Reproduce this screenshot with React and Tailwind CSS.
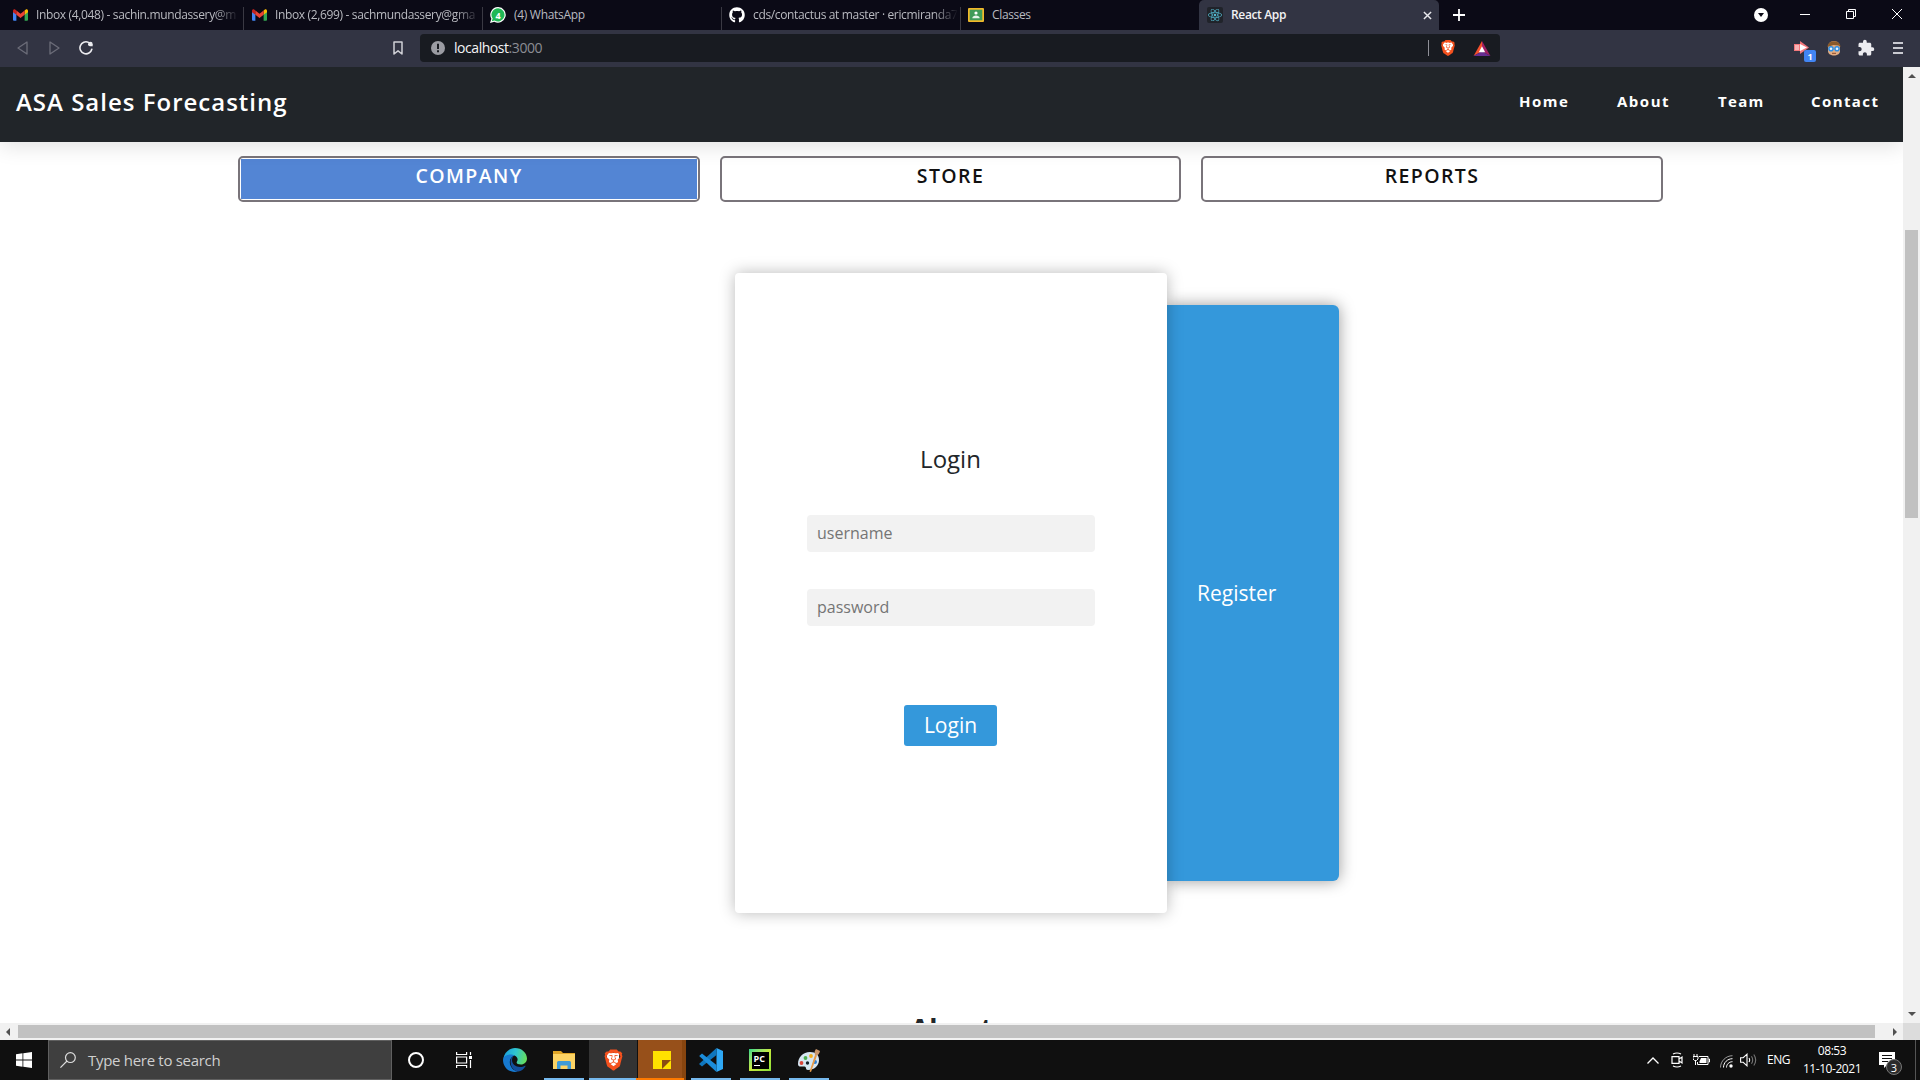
import React from "react";
import { FaGithub, FaReact } from "react-icons/fa";
import { MdExtension } from "react-icons/md";
import { SiBrave } from "react-icons/si";

function Gmail() {
  return (
    <svg viewBox="0 0 16 12" className="h-[12px] w-[15px] shrink-0">
      <path d="M0 2v9a1 1 0 0 0 1 1h2.6V4.5z" fill="#4285f4" />
      <path d="M16 2v9a1 1 0 0 1-1 1h-2.6V4.5z" fill="#34a853" />
      <path d="M12.4 1.2v4.6L16 3V1.6C16 .2 14.5-.5 13.4.4z" fill="#fbbc04" />
      <path d="M0 3l3.6 2.8V1.2L2.6.4C1.5-.5 0 .2 0 1.6z" fill="#c5221f" />
      <path d="M3.6 5.8V1.2L8 4.6l4.4-3.4v4.6L8 9.2z" fill="#ea4335" />
    </svg>
  );
}

function WhatsApp() {
  return (
    <div className="relative flex h-4 w-4 shrink-0 items-center justify-center">
      <svg viewBox="0 0 16 16" className="absolute h-4 w-4">
        <path d="M8.200 0A7.800 7.800 0 0 0 1.400 11.800L0 16l4.300-1.300A7.800 7.800 0 1 0 8.200 0z" fill="#fff" />
        <path d="M8.200 1.200A6.600 6.600 0 0 0 2.700 11.600l-1 2.700 2.900-.8A6.600 6.600 0 1 0 8.200 1.200z" fill="#1fb855" />
      </svg>
      <span className="relative text-[9px] font-bold leading-none text-white">4</span>
    </div>
  );
}

function Classroom() {
  return (
    <svg viewBox="0 0 16 14" className="h-[14px] w-4 shrink-0">
      <rect width="16" height="14" rx="1" fill="#f2b92a" />
      <rect x="1.700" y="1.700" width="12.600" height="10.600" fill="#3f9b58" />
      <circle cx="8" cy="5" r="1.600" fill="#fff" />
      <path d="M4.300 10.300c0-2 2-2.800 3.700-2.800s3.700.8 3.700 2.800z" fill="#e6f3ea" />
    </svg>
  );
}

function BraveIcon({ className }) {
  return (
    <div className={"relative flex items-center justify-center " + className}>
      <div className="absolute h-[62%] w-[60%] rounded-b-full bg-white" />
      <SiBrave className="relative h-full w-full" color="#f4511e" />
    </div>
  );
}

function TabStrip() {
  const text = "overflow-hidden whitespace-nowrap text-[12px] text-[#b9bac0]";
  const fade = " [mask-image:linear-gradient(to_right,black_88%,transparent)]";
  return (
    <div className="flex h-[30px] shrink-0 bg-[#0b0a16]">
      <div className="flex w-[243px] items-center pl-[13px]">
        <Gmail />
        <span className={text + fade + " ml-2 w-[203px] tracking-[-0.350px]"}>Inbox (4,048) - sachin.mundassery@m</span>
      </div>
      <div className="mt-[7px] w-px bg-[#3a3943]" />
      <div className="flex w-[238px] items-center pl-[8px]">
        <Gmail />
        <span className={text + fade + " ml-2 w-[205px] tracking-[-0.350px]"}>Inbox (2,699) - sachmundassery@gma</span>
      </div>
      <div className="mt-[7px] w-px bg-[#3a3943]" />
      <div className="flex w-[238px] items-center pl-[7px]">
        <WhatsApp />
        <span className={text + " ml-2 tracking-[-0.300px]"}>(4) WhatsApp</span>
      </div>
      <div className="mt-[7px] w-px bg-[#3a3943]" />
      <div className="flex w-[238px] items-center pl-[7px]">
        <FaGithub className="h-4 w-4 shrink-0 text-white" />
        <span className={text + fade + " ml-2 w-[205px] tracking-[-0.350px]"}>cds/contactus at master · ericmiranda7</span>
      </div>
      <div className="mt-[7px] w-px bg-[#3a3943]" />
      <div className="flex w-[238px] items-center pl-[7px]">
        <Classroom />
        <span className={text + " ml-2 tracking-[-0.350px]"}>Classes</span>
      </div>
      <div className="flex w-[240px] items-center rounded-t-[5px] bg-[#323443] pl-2 pr-[7px]">
        <span className="flex h-4 w-4 items-center justify-center rounded-[2px] bg-[#20232a]">
          <FaReact className="h-[14px] w-[14px] text-[#53b8cf]" />
        </span>
        <span className="ml-2 flex-1 text-[12px] font-semibold tracking-[-0.350px] text-[#f2f2f4]">React App</span>
        <svg viewBox="0 0 10 10" className="h-[9px] w-[9px]" stroke="#e8e8ec" strokeWidth="1.600">
          <path d="M1 1l8 8M9 1l-8 8" />
        </svg>
      </div>
      <div className="flex flex-1 items-center pl-[14px]">
        <svg viewBox="0 0 12 12" className="h-3 w-3" stroke="#fff" strokeWidth="1.800">
          <path d="M6 0v12M0 6h12" />
        </svg>
        <svg viewBox="0 0 14 14" className="ml-[289px] h-[14px] w-[14px]">
          <circle cx="7" cy="7" r="7" fill="#fff" />
          <path d="M4 5h6L7 9z" fill="#0b0a16" />
        </svg>
        <div className="mb-px ml-[32px] h-px w-[10px] bg-white" />
        <svg viewBox="0 0 10 10" className="mb-[2px] ml-[36px] h-[10px] w-[10px]" fill="none" stroke="#fff">
          <path d="M.5 2.500h7v7h-7zM2.500 2.500v-2h7v7h-2" />
        </svg>
        <svg viewBox="0 0 10 10" className="mb-[2px] ml-[36px] h-[10px] w-[10px]" stroke="#fff">
          <path d="M0 0l10 10M10 0L0 10" />
        </svg>
      </div>
    </div>
  );
}

function AddressBar() {
  return (
    <div className="flex h-[37px] shrink-0 items-center bg-[#323443] pb-px">
      <svg viewBox="0 0 11 14" className="ml-[17px] h-[14px] w-[11px]" fill="none" stroke="#6c6d79" strokeWidth="1.300">
        <path d="M10 1v12L1 7z" strokeLinejoin="round" />
      </svg>
      <svg viewBox="0 0 11 14" className="ml-[21px] h-[14px] w-[11px]" fill="none" stroke="#6c6d79" strokeWidth="1.300">
        <path d="M1 1v12l9-6z" strokeLinejoin="round" />
      </svg>
      <svg viewBox="0 0 14 14" className="ml-[19px] h-[14px] w-[14px]" fill="none" stroke="#ececf0" strokeWidth="1.600">
        <path d="M12.800 8.200A6 6 0 1 1 9.500 1.400" strokeLinecap="round" />
        <path d="M9 3.200a2.300 2.300 0 0 1 4.700 0V5.300H11A2.200 2.200 0 0 1 9 3.200z" fill="#ececf0" stroke="none" />
      </svg>
      <svg viewBox="0 0 10 14" className="ml-[300px] h-[14px] w-[10px]" fill="none" stroke="#d0d0d6" strokeWidth="1.500">
        <path d="M1 1h8v12L5 9.800 1 13z" strokeLinejoin="round" />
      </svg>
      <div className="ml-[17px] flex h-[28px] w-[1080px] items-center rounded-[4px] bg-[#181b21] pl-[11px] pr-[9px]">
        <svg viewBox="0 0 14 14" className="h-[14px] w-[14px]">
          <circle cx="7" cy="7" r="7" fill="#9b9ca3" />
          <path d="M6 2.800h2v5.200H6zM6 9.300h2v2H6z" fill="#181b21" />
        </svg>
        <span className="ml-[9px] flex-1 text-[14px] leading-[20px] tracking-[-0.450px] text-[#8b8d94]">
          <span className="text-[#f4f4f6]">localhost</span>:3000
        </span>
        <div className="h-4 w-px bg-[#8f9098]" />
        <BraveIcon className="ml-[11px] h-[18px] w-[16px]" />
        <svg viewBox="0 0 18 16" className="ml-[17px] h-[15px] w-[18px]">
          <path d="M9 0L0 16l9-5z" fill="#f4502c" />
          <path d="M9 0l9 16-9-5z" fill="#9e1f63" />
          <path d="M0 16h18l-9-5z" fill="#662d91" />
          <path d="M9 5.500l3.400 6.500H5.600z" fill="#fff" />
        </svg>
      </div>
      <div className="relative ml-[294px] h-4 w-4">
        <svg viewBox="0 0 16 16" className="h-4 w-4">
          <path d="M0 4h6V1l9 6.500L6 14v-3H0z" fill="#f3787c" />
          <path d="M6 4l7 3.500L6 11z" fill="#fff" />
          <path d="M1 5h4v5H1z" fill="#f9b3b5" />
        </svg>
        <span className="absolute left-[10px] top-[10px] flex h-3 w-3 items-center justify-center rounded-[2px] bg-[#4285f4] text-[9px] font-bold leading-none text-white">1</span>
      </div>
      <svg viewBox="0 0 14 15" className="ml-[17px] h-[15px] w-[14px]">
        <path d="M1 6c0-8 12-8 12 0v4c0 6-12 6-12 0z" fill="#e3ad83" />
        <path d="M.5 6C.5-1.800 13.500-1.800 13.500 6l-2-1.500-5-.500-4 1.200z" fill="#8a5a2b" />
        <circle cx="4" cy="7.800" r="2.800" fill="#2d8fe6" />
        <circle cx="10" cy="7.800" r="2.800" fill="#2d8fe6" />
        <circle cx="4" cy="7.800" r="1.300" fill="#e8f5ff" />
        <circle cx="10" cy="7.800" r="1.300" fill="#e8f5ff" />
        <path d="M5 12.300h4" stroke="#8a4a2b" />
      </svg>
      <MdExtension className="ml-[16px] h-[18px] w-[18px] text-[#ececf0]" />
      <div className="ml-[18px] flex flex-col gap-[3px]">
        <div className="h-[2px] w-[10px] bg-[#c9cad1]" />
        <div className="h-[2px] w-[10px] bg-[#c9cad1]" />
        <div className="h-[2px] w-[10px] bg-[#c9cad1]" />
      </div>
    </div>
  );
}

function SiteHeader() {
  return (
    <header className="relative z-10 flex h-[75px] shrink-0 items-center bg-[#212529] pl-4 font-semibold text-white shadow-[0_4px_20px_rgba(0,0,0,0.12)]">
      <h1 className="mb-[6px] flex-1 text-[24px] tracking-[1px]">ASA Sales Forecasting</h1>
      <nav className="mb-[7px] flex text-[15px] font-bold">
        <a className="w-[98px] tracking-[1.500px]">Home</a>
        <a className="w-[101px] tracking-[1.500px]">About</a>
        <a className="w-[93px] tracking-[1.300px]">Team</a>
        <a className="w-[92px] tracking-[1.400px]">Contact</a>
      </nav>
    </header>
  );
}

function ModeTabs() {
  const base = "flex h-[46px] justify-center rounded-[5px] border-2 border-[#79747a] p-px text-[19.500px] font-semibold tracking-[1.400px]";
  return (
    <div className="mt-[14px] flex shrink-0 gap-[20px] pl-[238px]">
      <button className={base + " w-[462px] text-white"}>
        <span className="flex h-full w-full justify-center bg-[#5385d4] pt-[2px]">COMPANY</span>
      </button>
      <button className={base + " w-[461px] pt-[3px] text-[#111]"}>STORE</button>
      <button className={base + " w-[462px] pt-[3px] text-[#111]"}>REPORTS</button>
    </div>
  );
}

function LoginPanel() {
  const input = "h-[37px] w-[288px] rounded-[4px] bg-[#f2f2f2] px-[10px] pb-px text-[16px] placeholder:text-[#757575]";
  return (
    <div className="mt-[71px] flex shrink-0 items-center pl-[735px]">
      <section className="relative z-[1] flex h-[640px] w-[432px] flex-col items-center rounded-[4px] bg-white pt-[168px] shadow-[0_0_16px_rgba(0,0,0,0.28)]">
        <h2 className="mr-px h-[36px] text-[24px] leading-[36px] text-[#212529]">Login</h2>
        <input className={input + " mt-[38px]"} placeholder="username" />
        <input className={input + " mt-[37px]"} placeholder="password" />
        <button className="mr-px mt-[79px] h-[41px] w-[93px] rounded-[3px] bg-[#3498db] text-[21px] text-white">Login</button>
      </section>
      <section className="flex h-[576px] w-[172px] items-center rounded-r-[6px] bg-[#3498db] pl-[30px] pt-[2px] text-[21px] text-white shadow-[0_0_16px_rgba(0,0,0,0.4)]">
        Register
      </section>
    </div>
  );
}

function Arrow({ d, className }) {
  return (
    <svg viewBox="0 0 8 8" className={"h-2 w-2 " + className} fill="#505050">
      <path d={d} />
    </svg>
  );
}

function VerticalScroll() {
  return (
    <div className="flex w-[17px] flex-col items-center bg-[#f1f1f1]">
      <Arrow d="M4 2l4 4H0z" className="mt-[5px]" />
      <div className="mt-[150px] h-[288px] w-[13px] bg-[#c1c1c1]" />
      <div className="flex-1" />
      <Arrow d="M4 6L0 2h8z" className="mb-[5px]" />
    </div>
  );
}

function HorizontalScroll() {
  return (
    <div className="flex h-[17px] shrink-0 items-center bg-[#f1f1f1]">
      <Arrow d="M2 4l4-4v8z" className="ml-[4px]" />
      <div className="ml-[6px] h-[13px] w-[1857px] bg-[#c1c1c1]" />
      <Arrow d="M6 4L2 0v8z" className="ml-[16px]" />
      <div className="ml-auto h-full w-[17px] bg-[#dcdcdc]" />
    </div>
  );
}

function Slot({ children, bar, className = "mr-px" }) {
  return (
    <div className={"flex h-10 w-[48px] shrink-0 flex-col items-center " + className}>
      <div className="flex h-[38px] w-full items-center justify-center pt-[2px]">{children}</div>
      <div className={"h-[2px] " + (bar || "")} />
    </div>
  );
}

function EdgeIcon() {
  return (
    <svg viewBox="0 0 24 24" className="h-6 w-6">
      <defs>
        <linearGradient id="edgeFill" x1="0" y1="0.300" x2="1" y2="0.500">
          <stop offset="0" stopColor="#1a9fe0" />
          <stop offset="0.500" stopColor="#2fc5cf" />
          <stop offset="1" stopColor="#66dd5c" />
        </linearGradient>
      </defs>
      <path d="M.3 11C1.200 4.500 6.200 0 12 0c6.800 0 12 5 12 10.500 0 3.600-2.800 6-6 6-2.800 0-4.400-1-4.400-2 0-.8 1-1.300 1-3C14.600 9 12 7 8.500 7 4.500 7 1.500 9 .3 11z" fill="url(#edgeFill)" />
      <path d="M0 12c0-3.500 4-5.500 7.600-5.500 1.500 0 3 .3 4 1-3 .7-4.800 3.500-4.800 6.500 0 4.500 3.500 9 8 9.300-1 .5-2 .7-3 .7C5 24 0 18.500 0 12z" fill="#1679cf" />
      <path d="M7.500 13.500c0-2.300 1-4.600 3-5.500-1 1.200-1.500 2.500-1.500 4 0 4 3.500 7 8 7 2 0 3.800-.6 5-1.300.5-.2.800.2.500.6C20.700 21.500 17.500 24 14.500 23.500c-4-.7-7-5-7-10z" fill="#134f9c" />
    </svg>
  );
}

function TaskIcons() {
  return (
    <div className="flex">
      <Slot className="mr-0">
        <div className="h-4 w-4 rounded-full border-2 border-white" />
      </Slot>
      <Slot className="mr-[3px]">
        <svg viewBox="0 0 16 16" className="h-4 w-4" fill="none" stroke="#fff" strokeWidth="1.200">
          <path d="M.6 0v2.500h10V0M.6 16v-2.500h10V16M.6 5h10v6H.6zM14.500 0v3M14.500 8v8" />
          <path d="M13 4h3v3h-3z" fill="#fff" stroke="none" />
        </svg>
      </Slot>
      <Slot>
        <EdgeIcon />
      </Slot>
      <Slot bar="w-10 bg-[#76b9ed]">
        <svg viewBox="0 0 22 18" className="h-[18px] w-[22px]">
          <path d="M0 0h8l2 2h12v16H0z" fill="#e0a526" />
          <path d="M0 3h22v15H0z" fill="#fcd364" />
          <path d="M4 18v-6.500A1.500 1.500 0 0 1 5.500 10h11a1.500 1.500 0 0 1 1.500 1.500V18h-3.500v-3.500h-7V18z" fill="#3f9bd7" />
        </svg>
      </Slot>
      <Slot bar="w-[48px] bg-[#76b9ed]" className="mr-px bg-[#333333]">
        <BraveIcon className="h-6 w-[21px]" />
      </Slot>
      <Slot bar="w-[48px] bg-[#ff7a00]" className="mr-px border-r-[4px] border-[#87450f] bg-[#97501a]">
        <svg viewBox="0 0 18 18" className="ml-1 h-[18px] w-[18px]">
          <path d="M0 0h18v18H0z" fill="#ffe100" />
          <path d="M9 9h9l-9 9z" fill="#8a4a12" />
        </svg>
      </Slot>
      <Slot bar="w-10 bg-[#76b9ed]">
        <svg viewBox="0 0 24 24" className="h-6 w-6">
          <path d="M17.500 0L24 3v18l-6.500 3z" fill="#2fa8f5" />
          <path d="M17.500 0v7L3 18.500l-3-2.500z" fill="#0f76bd" />
          <path d="M17.500 24v-7L3 5.500.2 8z" fill="#1b8ddb" />
        </svg>
      </Slot>
      <Slot bar="w-10 bg-[#76b9ed]">
        <div className="flex h-[22px] w-[22px] items-center justify-center bg-linear-to-br from-[#21d789] via-[#c5ea3e] to-[#8be03a]">
          <div className="flex h-[17px] w-[17px] flex-col bg-black pl-[2px] pt-[2px]">
            <span className="text-[9px] font-bold leading-[9px] text-white">PC</span>
            <div className="mt-[2px] h-px w-[6px] bg-white" />
          </div>
        </div>
      </Slot>
      <Slot bar="w-10 bg-[#76b9ed]">
        <svg viewBox="0 0 24 24" className="h-6 w-6">
          <path d="M1 16C1 9 6 4 13 4c6 0 9 3 9 8 0 6-5 10-11 10-3 0-1-3-3.500-3.500S1 20 1 16z" fill="#d6e6f2" />
          <circle cx="4.500" cy="15" r="1.900" fill="#d9443a" />
          <circle cx="8.500" cy="10" r="1.900" fill="#4caf50" />
          <circle cx="14" cy="8" r="1.900" fill="#f2b01e" />
          <circle cx="10.500" cy="15" r="1.700" fill="#16202a" />
          <circle cx="18" cy="14" r="2" fill="#2e7fd1" />
          <path d="M12.500 23.500L18 7l2 .6L14 24z" fill="#e59b4a" />
          <path d="M18 7c-1-3 0-5 1-6l4 2c-.5 2-1.500 3.500-3 4.600z" fill="#c9976b" />
        </svg>
      </Slot>
    </div>
  );
}

function Tray() {
  return (
    <div className="ml-auto flex items-center text-white">
      <svg viewBox="0 0 12 7" className="h-[7px] w-3" fill="none" stroke="#fff" strokeWidth="1.300">
        <path d="M.5 6.500L6 1l5.500 5.500" />
      </svg>
      <svg viewBox="0 0 12 16" className="ml-3 h-4 w-3" fill="none" stroke="#fff" strokeWidth="1.200">
        <path d="M1 4.600h7v6.800H1zM8 7l3-2v6L8 9M2 2Q6 0 10 2M2 14q4 2 8 0" />
      </svg>
      <svg viewBox="0 0 17 12" className="ml-[10px] h-3 w-[17px]" fill="none" stroke="#fff">
        <path d="M6 2.500h9v8H4.500V8M15.500 5h1v3h-1" />
        <path d="M8 4h5.500v5H6.500V7.500z" fill="#fff" stroke="none" />
        <path d="M1 0v2M4 0v2M0 2.500h5V5L3.500 6.500h-2L0 5zM2.500 6v5" />
      </svg>
      <svg viewBox="0 0 13 13" className="ml-[10px] mt-[2px] h-[13px] w-[13px]" fill="none">
        <path d="M.5 12.500C.5 6 6 .7 12.500.7" stroke="#9a9a9a" />
        <path d="M3.500 12.500C3.500 7.500 7.500 3.700 12.500 3.700M6.500 12.500c0-3.300 2.700-5.800 6-5.800" stroke="#fff" />
        <circle cx="11" cy="11" r="1.700" fill="#fff" />
      </svg>
      <svg viewBox="0 0 17 14" className="ml-[7px] h-[14px] w-[17px]" fill="none" stroke="#fff" strokeWidth="1.100">
        <path d="M.6 4.700h2.600L7 1.200v11.600L3.200 9.300H.6zM9 5q1.300 2 0 4" />
        <path d="M11.500 3.200q2.400 3.800 0 7.600M13.800 1.500q3.800 5.500 0 11" stroke="#777" />
      </svg>
      <span className="ml-[10px] w-[24px] text-[12px] tracking-[-0.500px]">ENG</span>
      <div className="ml-[12px] flex w-[58px] flex-col items-center whitespace-nowrap text-[12px] leading-[18px] tracking-[-0.450px]">
        <span>08:53</span>
        <span>11-10-2021</span>
      </div>
      <div className="relative ml-[18px] h-4 w-4">
        <svg viewBox="0 0 16 16" className="h-4 w-4">
          <path d="M0 0h16v13H8l-3 3v-3H0z" fill="#fff" />
          <path d="M3 3.500h10M3 6.500h10M3 9.500h6" stroke="#101010" />
        </svg>
        <span className="absolute left-[7px] top-[7px] flex h-4 w-4 items-center justify-center rounded-full border border-[#777] bg-[#2b2b2b] text-[11px] leading-none">3</span>
      </div>
      <div className="ml-[20px] mr-1 h-10 w-px bg-[#555]" />
    </div>
  );
}

function Taskbar() {
  return (
    <div className="flex h-10 shrink-0 bg-[#101010]">
      <div className="flex w-12 items-center justify-center">
        <svg viewBox="0 0 16 16" className="h-4 w-4" fill="#fff">
          <path d="M0 2.200l6.500-.9v6.300H0zM7.300 1.200L16 0v7.600H7.300zM0 8.400h6.500v6.300L0 13.800zM7.300 8.400H16V16l-8.700-1.200z" />
        </svg>
      </div>
      <div className="flex w-[344px] items-center border border-[#606060] bg-[#3f3f3f] pl-[11px]">
        <svg viewBox="0 0 16 16" className="h-4 w-4" fill="none" stroke="#ddd" strokeWidth="1.200">
          <circle cx="10.400" cy="5.600" r="4.900" />
          <path d="M7 9L.4 15.600" />
        </svg>
        <span className="ml-3 text-[15px] tracking-[-0.300px] text-[#cfcfcf]">Type here to search</span>
      </div>
      <TaskIcons />
      <Tray />
    </div>
  );
}

export default function App() {
  return (
    <div className="flex h-[1080px] w-[1920px] flex-col overflow-hidden bg-white font-['Open_Sans','Noto_Sans',sans-serif]">
      <TabStrip />
      <AddressBar />
      <div className="flex h-[956px] shrink-0">
        <div className="flex w-[1903px] flex-col overflow-hidden">
          <SiteHeader />
          <ModeTabs />
          <LoginPanel />
          <h2 className="mt-[94px] h-[42px] shrink-0 text-center text-[27px] font-bold leading-[42px] text-[#212529]">About</h2>
        </div>
        <VerticalScroll />
      </div>
      <HorizontalScroll />
      <Taskbar />
    </div>
  );
}
